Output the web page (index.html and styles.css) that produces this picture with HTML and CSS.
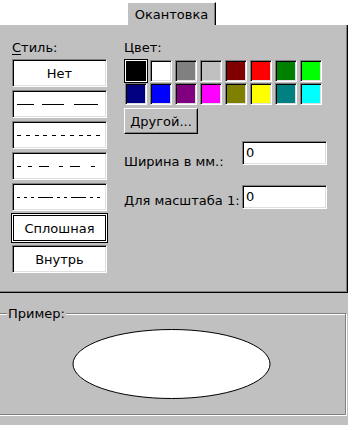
FILE: index.html
```html
<!DOCTYPE html>
<html>
<head>
<meta charset="utf-8">
<link rel="stylesheet" href="styles.css">
</head>
<body>
<div class="dialog">
  <div class="tabs"><div class="tab">Окантовка</div></div>
  <div class="panel">
    <div class="col-style">
      <div class="label"><u>С</u>тиль:</div>
      <div class="styles">
        <div class="sbox">Нет</div>
        <div class="sbox"><svg class="dash" width="93" height="26"><path d="M4 13.5H21M29 13.5H51M61 13.5H85"/></svg></div>
        <div class="sbox"><svg class="dash" width="93" height="26"><path d="M4 13.5H87" stroke-dasharray="4 4.8"/></svg></div>
        <div class="sbox"><svg class="dash" width="93" height="26"><path d="M4 13.5H8M15 13.5H19M26 13.5H36M46 13.5H50M57 13.5H67M78 13.5H82"/></svg></div>
        <div class="sbox"><svg class="dash" width="93" height="26"><path d="M4 13.5H7M11 13.5H14M18 13.5H21M25 13.5H40M44 13.5H47M51 13.5H54M58 13.5H73M77 13.5H80M84 13.5H87"/></svg></div>
        <div class="sbox sel">Сплошная</div>
        <div class="sbox">Внутрь</div>
      </div>
    </div>
    <div class="col-color">
      <div class="label">Цвет:</div>
      <div class="swatches">
        <div class="sw sel" style="background:#000000"></div>
        <div class="sw" style="background:#ffffff"></div>
        <div class="sw" style="background:#808080"></div>
        <div class="sw" style="background:#c0c0c0"></div>
        <div class="sw" style="background:#800000"></div>
        <div class="sw" style="background:#ff0000"></div>
        <div class="sw" style="background:#008000"></div>
        <div class="sw" style="background:#00ff00"></div>
        <div class="sw" style="background:#000080"></div>
        <div class="sw" style="background:#0000ff"></div>
        <div class="sw" style="background:#800080"></div>
        <div class="sw" style="background:#ff00ff"></div>
        <div class="sw" style="background:#808000"></div>
        <div class="sw" style="background:#ffff00"></div>
        <div class="sw" style="background:#008080"></div>
        <div class="sw" style="background:#00ffff"></div>
      </div>
      <div class="btn">Другой...</div>
      <div class="field first"><span class="flabel">Ширина в мм.:</span><div class="input">0</div></div>
      <div class="field second"><span class="flabel">Для масштаба 1:</span><div class="input">0</div></div>
    </div>
  </div>
  <div class="lower">
    <fieldset class="group">
      <legend>Пример:</legend>
      <svg class="sample" width="200" height="72"><ellipse cx="99.5" cy="36" rx="98.5" ry="34.5"/></svg>
    </fieldset>
  </div>
</div>
</body>
</html>
```
FILE: styles.css
```css
* { box-sizing: border-box; }
body {
  margin: 0;
  background: #ffffff;
  font-family: "DejaVu Sans", sans-serif;
  font-size: 13px;
  line-height: 15px;
  color: #000;
}
.dialog { width: 348px; }

.tabs {
  height: 25px;
  display: flex;
  align-items: flex-end;
  padding-left: 127px;
}
.tab {
  width: 89px;
  height: 23px;
  background: #c0c0c0;
  border-left: 1px solid #fff;
  border-top: 1px solid #fff;
  border-right: 1px solid #000;
  box-shadow: inset -1px 0 0 #808080;
  display: flex;
  justify-content: center;
  align-items: center;
  padding-top: 1px;
}

.panel {
  height: 268px;
  background: #c0c0c0;
  border-right: 1px solid #000;
  border-bottom: 1px solid #000;
  box-shadow: inset -1px -1px 0 #808080;
  display: flex;
  padding: 15px 0 0 12px;
  gap: 17px;
}
.label { height: 15px; }
.label u { text-decoration-thickness: 1px; text-underline-offset: 2px; }

.col-style { width: 95px; }
.styles {
  margin-top: 4px;
  display: flex;
  flex-direction: column;
  gap: 3px;
}
.sbox {
  height: 28px;
  background: #fff;
  border: 1px solid;
  border-color: #808080 #fff #fff #808080;
  box-shadow: inset 1px 1px 0 #000, inset -1px -1px 0 #dfdfdf;
  display: flex;
  align-items: center;
  justify-content: center;
}
.sbox.sel {
  border-color: #fff;
  outline: 1px solid #000;
  box-shadow: inset 0 0 0 1px #000;
}
.dash { display: block; }
.dash path { stroke: #000; stroke-width: 1; fill: none; shape-rendering: crispEdges; }

.col-color { display: flex; flex-direction: column; align-items: flex-start; }
.swatches {
  margin: 5px 0 0 1px;
  display: grid;
  grid-template-columns: repeat(8, 22px);
  grid-auto-rows: 22px;
  column-gap: 3px;
  row-gap: 1px;
}
.sw {
  border: 1px solid;
  border-color: #808080 #fff #fff #808080;
  box-shadow: inset 1px 1px 0 #000, inset -1px -1px 0 #dfdfdf;
}
.sw.sel {
  border-color: #fff;
  box-shadow: none;
  outline: 1px solid #000;
}
.btn {
  margin-top: 3px;
  width: 74px;
  height: 26px;
  background: #c0c0c0;
  border: 1px solid;
  border-color: #fff #000 #000 #fff;
  box-shadow: inset -1px -1px 0 #808080;
  display: flex;
  align-items: center;
  justify-content: center;
}
.field {
  display: flex;
  align-items: flex-start;
  width: 203px;
  justify-content: space-between;
}
.field.first { margin-top: 7px; }
.field.first .flabel { padding-top: 13px; }
.field.second { margin-top: 16px; }
.field.second .flabel { padding-top: 8px; }
.input {
  width: 85px;
  height: 24px;
  background: #fff;
  border: 1px solid;
  border-color: #808080 #fff #fff #808080;
  box-shadow: inset 1px 1px 0 #000, inset -1px -1px 0 #dfdfdf;
  padding: 3px 0 0 3px;
}

.lower {
  height: 132px;
  background: #c0c0c0;
  padding-top: 13px;
}
.group {
  margin: 0 0 0 -2px;
  width: 348px;
  height: 109px;
  border: 1px solid #808080;
  box-shadow: 1px 1px 0 #fff, inset 1px 1px 0 #fff;
  padding: 0 8px;
}
.group legend {
  padding: 0 1px;
  margin-left: 0;
  background: #c0c0c0;
}
.sample { display: block; margin: 7px auto 0; }
.sample ellipse { fill: #fff; stroke: #000; stroke-width: 1; }
```
